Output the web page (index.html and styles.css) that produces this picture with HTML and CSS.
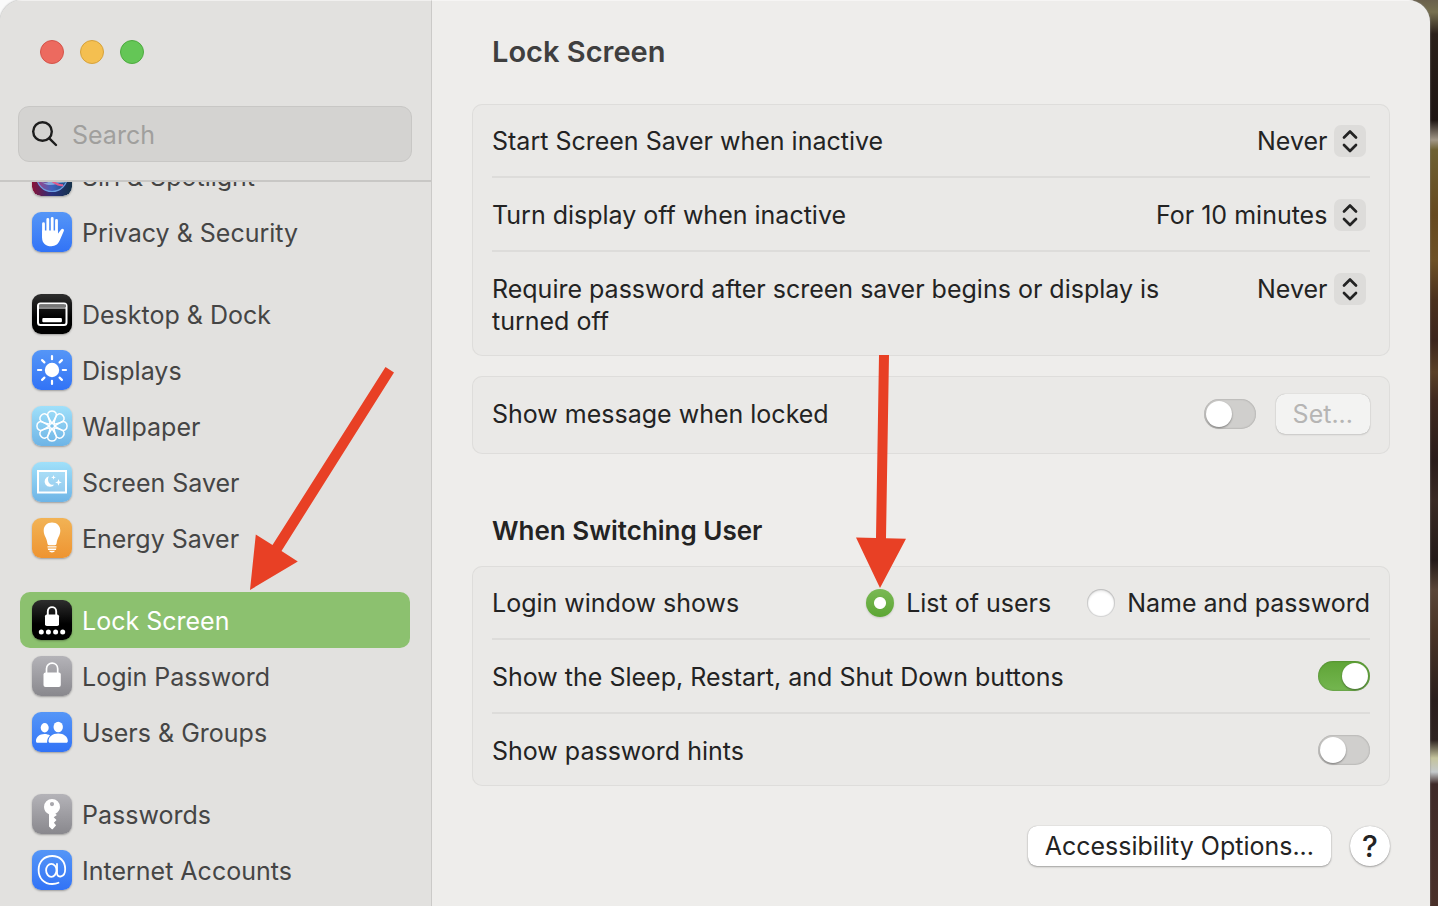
FILE: index.html
```html
<!DOCTYPE html>
<html lang="en">
<head>
<meta charset="utf-8">
<title>Lock Screen</title>
<link rel="stylesheet" href="styles.css">
</head>
<body>
<div class="window">
  <aside class="sidebar">
    <header class="sidebar-head">
      <div class="lights">
        <button class="light close" aria-label="Close"></button>
        <button class="light minimize" aria-label="Minimize"></button>
        <button class="light zoom" aria-label="Zoom"></button>
      </div>
      <label class="search">
        <svg class="search-icon" viewBox="0 0 28 28" aria-hidden="true"><circle cx="11.5" cy="11.5" r="9.3"/><path d="M18.3 18.3 25 25"/></svg>
        <input class="search-input" type="search" placeholder="Search" aria-label="Search">
      </label>
    </header>
    <nav class="nav">
      <div class="nav-list">
        <div class="nav-group">
          <a class="nav-item" href="#siri">
            <svg class="icon siri" viewBox="0 0 40 40" aria-hidden="true">
              <defs>
                <linearGradient id="siri-bg" x1="0" y1="0" x2="1" y2="0"><stop offset="0" stop-color="#8a1236"/><stop offset=".5" stop-color="#28307e"/><stop offset="1" stop-color="#16324a"/></linearGradient>
                <linearGradient id="siri-orb" x1="0" y1="0" x2="1" y2="0"><stop offset="0" stop-color="#a8407e"/><stop offset=".5" stop-color="#3f62c0"/><stop offset="1" stop-color="#1c4c7c"/></linearGradient>
              </defs>
              <rect width="40" height="40" rx="9" fill="url(#siri-bg)"/>
              <circle cx="20" cy="20" r="15.5" fill="url(#siri-orb)" stroke="#6c9de0" stroke-width="1.200"/>
              <path d="M8 25c7 5 10-1 14-3s8 1 11 5c-8-2-13 7-25-2z" fill="#a7d4f5" opacity=".6"/>
              <path d="M10 21c9 1 15 10 21 8" fill="none" stroke="#e05a8d" stroke-width="2"/>
            </svg>
            <span class="nav-text">Siri &amp; Spotlight</span>
          </a>
          <a class="nav-item" href="#privacy">
            <svg class="icon blue" viewBox="0 0 40 40" aria-hidden="true">
              <path d="M11.500 25V11.700M15.800 22V7.400M20.200 22V6.400M24.500 22V8.400" fill="none" stroke="#fff" stroke-width="2.800" stroke-linecap="round"/>
              <path d="M10.100 18.500v7.400c0 5 3.600 8.300 9.200 8.300 4.200 0 6.600-1.700 8.400-5.600l4.200-9.900c.5-1.500-1.600-2.800-2.800-1.300l-3.200 4.300v-3.200z" fill="#fff"/>
            </svg>
            <span class="nav-text">Privacy &amp; Security</span>
          </a>
        </div>
        <div class="nav-group">
          <a class="nav-item" href="#desktop">
            <svg class="icon black" viewBox="0 0 40 40" aria-hidden="true">
              <rect x="6" y="9.500" width="28.500" height="21.500" rx="2.500" fill="none" stroke="#fff" stroke-width="2"/>
              <path d="M7 11.800h27" stroke="#777" stroke-width="2.400"/><path d="M7 14h27" stroke="#fff" stroke-width="1.200"/>
              <rect x="10.300" y="24" width="19.600" height="4.200" rx="1" fill="#fff"/>
            </svg>
            <span class="nav-text">Desktop &amp; Dock</span>
          </a>
          <a class="nav-item" href="#displays">
            <svg class="icon blue" viewBox="0 0 40 40" aria-hidden="true">
              <circle cx="20" cy="20" r="7.200" fill="#fff"/>
              <path d="M20 6v3.200M20 30.800V34M6 20h3.200M30.800 20H34M10.100 10.100l2.300 2.300M27.600 27.600l2.300 2.300M10.100 29.900l2.300-2.300M27.600 12.400l2.300-2.300" stroke="#fff" stroke-width="2.200" stroke-linecap="round"/>
            </svg>
            <span class="nav-text">Displays</span>
          </a>
          <a class="nav-item" href="#wallpaper">
            <svg class="icon sky" viewBox="0 0 40 40" aria-hidden="true">
              <defs><path id="petal" d="M21.500 20 16.300 11.500C14.400 7.800 16.500 4.900 20 4.900s5.600 2.900 3.700 6.600L18.500 20"/></defs>
              <g fill="none" stroke="#fff" stroke-width="1.500" stroke-linejoin="round">
                <use href="#petal"/><use href="#petal" transform="rotate(45 20 20)"/><use href="#petal" transform="rotate(90 20 20)"/><use href="#petal" transform="rotate(135 20 20)"/><use href="#petal" transform="rotate(180 20 20)"/><use href="#petal" transform="rotate(225 20 20)"/><use href="#petal" transform="rotate(270 20 20)"/><use href="#petal" transform="rotate(315 20 20)"/>
              </g>
              <circle cx="20" cy="20" r="1.800" fill="#7cc3ec"/>
            </svg>
            <span class="nav-text">Wallpaper</span>
          </a>
          <a class="nav-item" href="#saver">
            <svg class="icon sky" viewBox="0 0 40 40" aria-hidden="true">
              <rect x="6" y="9" width="28" height="21.500" fill="#fff" fill-opacity=".2" stroke="#fff" stroke-width="2"/>
              <path d="M16.800 14.200a5.400 5.400 0 1 0 5.600 8.400c-4.500 1.200-8-3.200-5.600-8.400z" fill="#fff"/>
              <path d="M26.500 17l.9 2.500 2.500.9-2.500.9-.9 2.500-.9-2.500-2.500-.9 2.500-.9zM21.500 13l.6 1.800 1.800.6-1.800.6-.6 1.800-.6-1.800-1.800-.6 1.800-.6z" fill="#fff"/>
            </svg>
            <span class="nav-text">Screen Saver</span>
          </a>
          <a class="nav-item" href="#energy">
            <svg class="icon orange" viewBox="0 0 40 40" aria-hidden="true">
              <path d="M20 4.600c-4.900 0-8.300 3.500-8.300 8 0 5.200 2.700 6.500 3.700 12.600.2 1.300.6 2 1.800 2h5.600c1.200 0 1.600-.7 1.800-2 1-6.100 3.700-7.400 3.700-12.600 0-4.500-3.400-8-8.300-8z" fill="#fff"/>
              <path d="M15.500 28.200h9v1.400h-9zM15.700 30.500h8.600l-.4 1.400h-7.800zM17 32.700h6c-.5 1.200-1.600 1.700-3 1.700s-2.500-.5-3-1.700z" fill="#fff"/>
            </svg>
            <span class="nav-text">Energy Saver</span>
          </a>
        </div>
        <div class="nav-group">
          <a class="nav-item selected" href="#lock" aria-current="page">
            <svg class="icon black" viewBox="0 0 40 40" aria-hidden="true">
              <rect x="13" y="14.500" width="14" height="11.500" rx="1.800" fill="#fff"/>
              <path d="M15.800 15v-3.500c0-5.800 8.400-5.800 8.400 0V15" fill="none" stroke="#fff" stroke-width="1.900"/>
              <g fill="#fff"><circle cx="9.300" cy="32" r="2.500"/><circle cx="16.400" cy="32" r="2.500"/><circle cx="23.600" cy="32" r="2.500"/><circle cx="30.700" cy="32" r="2.500"/></g>
            </svg>
            <span class="nav-text">Lock Screen</span>
          </a>
          <a class="nav-item" href="#login">
            <svg class="icon gray" viewBox="0 0 40 40" aria-hidden="true">
              <rect x="11.500" y="16.500" width="17.300" height="14.500" rx="2" fill="#fff"/>
              <path d="M14.500 17v-4.300c0-7.400 11.200-7.400 11.200 0V17" fill="none" stroke="#fff" stroke-width="1.700"/>
            </svg>
            <span class="nav-text">Login Password</span>
          </a>
          <a class="nav-item" href="#users">
            <svg class="icon blue" viewBox="0 0 40 40" aria-hidden="true">
              <g fill="#fff">
                <ellipse cx="12.700" cy="15.800" rx="4" ry="4.700"/>
                <path d="M4 29c0-4.200 3.700-7 8.500-7 2.200 0 4 .5 5.500 1.500-2 1.700-3 4-2.900 7.300H5.500C4.400 30.800 4 30.100 4 29z"/>
                <ellipse cx="26.200" cy="15" rx="4.700" ry="5.200"/>
                <path d="M16.500 29c0-4.300 4-7.500 9.700-7.500s9.600 3.200 9.600 7.500c0 1.100-.5 1.800-1.700 1.800H18.200c-1.200 0-1.700-.7-1.700-1.800z"/>
              </g>
            </svg>
            <span class="nav-text">Users &amp; Groups</span>
          </a>
        </div>
        <div class="nav-group">
          <a class="nav-item" href="#passwords">
            <svg class="icon gray" viewBox="0 0 40 40" aria-hidden="true">
              <path fill-rule="evenodd" d="M20 5a8 8 0 0 0-8 8c0 3.300 2 6 5 7.300v12.200l2.600 2.500c.5.400.9.400 1.300-.1l3.200-3.600-2.200-2.500 2.600-2.700-2.800-2.800 3.200-2.200-1.600-1.400c2.900-1.400 4.700-4.200 4.700-6.700a8 8 0 0 0-8-8zm0 3a2.100 2.100 0 1 1 0 4.200 2.100 2.100 0 0 1 0-4.200z" fill="#fff"/>
            </svg>
            <span class="nav-text">Passwords</span>
          </a>
          <a class="nav-item" href="#internet">
            <svg class="icon blue" viewBox="0 0 40 40" aria-hidden="true">
              <g fill="none" stroke="#fff" stroke-width="1.800" stroke-linecap="round">
                <ellipse cx="19.300" cy="20.300" rx="5.200" ry="6.500"/>
                <path d="M25 14v9.300c0 4.800 8.200 4.800 8.200-4.300 0-8-5.500-13-13-13C12 6 6.600 11.800 6.600 20S12 34 20.200 34c2.600 0 4.600-.4 6.300-1.200"/>
              </g>
            </svg>
            <span class="nav-text">Internet Accounts</span>
          </a>
        </div>
      </div>
    </nav>
  </aside>

  <main class="content">
    <h1 class="title">Lock Screen</h1>

    <section class="card">
      <div class="row">
        <label class="row-label" for="saver-time">Start Screen Saver when inactive</label>
        <span class="popup">
          <select class="popup-select" id="saver-time"><option>Never</option></select>
          <svg class="stepper" viewBox="0 0 32 32" aria-hidden="true"><path d="m10 12.500 6-6 6 6M10 20l6 6 6-6"/></svg>
        </span>
      </div>
      <div class="row">
        <label class="row-label" for="display-time">Turn display off when inactive</label>
        <span class="popup">
          <select class="popup-select" id="display-time"><option>For 10 minutes</option></select>
          <svg class="stepper" viewBox="0 0 32 32" aria-hidden="true"><path d="m10 12.500 6-6 6 6M10 20l6 6 6-6"/></svg>
        </span>
      </div>
      <div class="row">
        <label class="row-label" for="password-time">Require password after screen saver begins or display is turned off</label>
        <span class="popup">
          <select class="popup-select" id="password-time"><option>Never</option></select>
          <svg class="stepper" viewBox="0 0 32 32" aria-hidden="true"><path d="m10 12.500 6-6 6 6M10 20l6 6 6-6"/></svg>
        </span>
      </div>
    </section>

    <section class="card">
      <div class="row row-message">
        <label class="row-label" for="message">Show message when locked</label>
        <input class="switch" id="message" type="checkbox">
        <button class="button" disabled>Set...</button>
      </div>
    </section>

    <h2 class="subtitle">When Switching User</h2>

    <section class="card">
      <div class="row">
        <span class="row-label" id="login-shows">Login window shows</span>
        <div class="radios" role="radiogroup" aria-labelledby="login-shows">
          <label class="choice"><input class="radio" type="radio" name="login" checked>List of users</label>
          <label class="choice"><input class="radio" type="radio" name="login">Name and password</label>
        </div>
      </div>
      <div class="row">
        <label class="row-label" for="power-buttons">Show the Sleep, Restart, and Shut Down buttons</label>
        <input class="switch" id="power-buttons" type="checkbox" checked>
      </div>
      <div class="row">
        <label class="row-label" for="hints">Show password hints</label>
        <input class="switch" id="hints" type="checkbox">
      </div>
    </section>

    <footer class="actions">
      <button class="button">Accessibility Options...</button>
      <button class="button help" aria-label="Help">?</button>
    </footer>
  </main>
</div>

<svg class="arrow arrow-left" viewBox="0 0 144 224" aria-hidden="true"><path d="m135.500 1 8.500 5.500L31.500 185l16.300 10.500L0 224l5.800-55.500L22.500 179z"/></svg>
<svg class="arrow arrow-right" viewBox="0 0 50 233" aria-hidden="true"><path d="M23 0h10l-3 183.300 20 .5L24 233 0 182.500l20 .5z"/></svg>
</body>
</html>
```

FILE: styles.css
```css
* {
  box-sizing: border-box;
}

body {
  margin: 0;
  height: 100vh;
  padding-right: 8px;
  overflow: hidden;
  position: relative;
  font-family: Inter, "Liberation Sans", sans-serif;
  font-size: 25px;
  line-height: 32px;
  color: #232323;
  background:
    linear-gradient(#6a604c 0, #77704f 12px, #2b201a 34px, #1e1512 120px, #a29787 140px, #6e6032 150px, #66491f 215px, #6e5126 260px, #4a301d 300px, #3c251c 340px, #5a4027 372px, #40291f 400px, #2a1c1a 460px, #3a2a24 500px, #241a18 560px, #5a4638 590px, #4a3426 630px, #2a1e1c 700px, #2e2320 740px, #c4c39c 758px, #c4c9cb 772px, #3f2a28 784px, #4a3029 906px) right / 40px 100% no-repeat,
    #fafafa;
}

.window {
  display: flex;
  height: 100%;
  border-radius: 22px 22px 0 0;
  overflow: hidden;
  background: #eeedeb;
  box-shadow: 0 0 2px #888;
}

.sidebar {
  flex: 0 0 432px;
  min-width: 0;
  display: flex;
  flex-direction: column;
  background: #e2e1df;
  border-top: 1px solid #f1f0ef;
  border-right: 1px solid #cbcac8;
}

.sidebar-head {
  padding: 39px 19px 18px 18px;
  border-bottom: 2px solid #c8c7c5;
}

.lights {
  display: flex;
  gap: 16px;
  padding-left: 22px;
  margin-bottom: 42px;
}

.light {
  width: 24px;
  height: 24px;
  padding: 0;
  border: 1px solid;
  border-radius: 50%;
}

.close {
  background: #ec6a5f;
  border-color: #d4544a;
}

.minimize {
  background: #f4bf50;
  border-color: #d6a23c;
}

.zoom {
  background: #64c656;
  border-color: #4dab3f;
}

.search {
  display: flex;
  align-items: center;
  gap: 13px;
  height: 56px;
  padding: 0 12px;
  border: 1px solid #c8c7c5;
  border-radius: 11px;
  background: #d4d3d1;
}

.search-icon {
  flex: none;
  width: 28px;
  height: 28px;
  fill: none;
  stroke: #1d1d1d;
  stroke-width: 2.4;
  stroke-linecap: round;
}

.search-input {
  flex: 1;
  min-width: 0;
  padding: 2px 0 0;
  border: 0;
  outline: 0;
  background: none;
  font: inherit;
  color: #232323;
}

.search-input::placeholder {
  color: #a09f9d;
}

.nav {
  flex: 1;
  min-height: 0;
  overflow: hidden;
}

.nav-list {
  display: flex;
  flex-direction: column;
  gap: 26px;
  margin-top: -34px;
  padding: 0 21px 0 20px;
}

.nav-item {
  display: flex;
  align-items: center;
  gap: 10px;
  height: 56px;
  padding: 0 12px;
  border-radius: 10px;
  color: #454545;
  text-decoration: none;
}

.nav-text {
  padding-top: 2px;
}

.selected {
  background: #8cc16f;
  color: #fff;
}

.icon {
  flex: none;
  width: 40px;
  height: 40px;
  border-radius: 9px;
  box-shadow: 0 1px 2px rgba(0, 0, 0, 0.3);
}

.blue {
  background: linear-gradient(#5596f7, #3273f6);
}

.black {
  background: linear-gradient(#2e2e2e, #000 60%);
}

.sky {
  background: linear-gradient(#a0e0fa, #6eb4e6);
}

.orange {
  background: linear-gradient(#f2b355, #ee9431);
}

.gray {
  background: linear-gradient(#b4b3b8, #89888d);
}

.content {
  flex: 1;
  min-width: 0;
  padding: 32px 40px;
  border-top: 1px solid #f6f5f4;
}

.title {
  margin: 0 20px 33px;
  font-size: 29px;
  line-height: 38px;
  font-weight: 600;
  color: #3f3f3f;
}

.card {
  padding: 0 20px;
  border-radius: 10px;
  background: #eae9e7;
  box-shadow: inset 0 0 0 1px #dedddb;
}

.card + .card {
  margin-top: 20px;
}

.row {
  display: flex;
  align-items: flex-start;
  justify-content: space-between;
  padding: 21px 0 19px;
}

.row:not(:last-child) {
  border-bottom: 2px solid #dddcda;
}

.row-label {
  flex: 0 1 auto;
  max-width: 700px;
}

.row-message {
  align-items: center;
  gap: 20px;
  padding: 18px 0 20px;
}

.row-message .row-label {
  flex: 1;
}

.popup {
  display: grid;
  align-items: center;
  padding-right: 4px;
}

.popup-select,
.stepper {
  grid-area: 1 / 1;
}

.popup-select {
  appearance: none;
  height: 32px;
  padding: 0 38px 0 0;
  border: 0;
  background: none;
  font: inherit;
  color: inherit;
}

.stepper {
  justify-self: end;
  width: 32px;
  height: 32px;
  border-radius: 7px;
  background: #dddcda;
  fill: none;
  stroke: #232323;
  stroke-width: 2.7;
  stroke-linecap: round;
  stroke-linejoin: round;
  pointer-events: none;
}

.switch {
  appearance: none;
  flex: none;
  display: flex;
  width: 52px;
  height: 30px;
  margin: 0;
  padding: 2px;
  border-radius: 15px;
  background: #d0cfcd;
  box-shadow: inset 0 0 2px rgba(0, 0, 0, 0.3);
}

.switch::before {
  content: "";
  width: 26px;
  height: 26px;
  border-radius: 50%;
  background: #fff;
  box-shadow: 0 1px 2px rgba(0, 0, 0, 0.4);
}

.switch:checked {
  justify-content: flex-end;
  background: linear-gradient(#5fa436, #74b650);
}

.button {
  height: 40px;
  padding: 0 17px;
  border: 0;
  border-radius: 9px;
  background: #fff;
  box-shadow: 0 0 1px rgba(0, 0, 0, 0.3), 0 1px 2px rgba(0, 0, 0, 0.3);
  font: inherit;
  color: #232323;
}

.button:disabled {
  background: #f3f3f2;
  color: #b6b5b4;
  box-shadow: 0 0 1px rgba(0, 0, 0, 0.3), 0 1px 2px rgba(0, 0, 0, 0.12);
}

.subtitle {
  margin: 61px 20px 19px;
  font-size: 26px;
  line-height: 32px;
  font-weight: 600;
}

.radios {
  display: flex;
  gap: 36px;
}

.choice {
  display: flex;
  align-items: center;
  gap: 12px;
}

.radio {
  appearance: none;
  width: 28px;
  height: 28px;
  margin: 0;
  border-radius: 50%;
  background: #fff;
  box-shadow: inset 0 0 1px 1px rgba(0, 0, 0, 0.18), inset 0 2px 3px rgba(0, 0, 0, 0.12);
}

.radio:checked {
  background: radial-gradient(circle, #fff 5.5px, transparent 6.5px), linear-gradient(#7ab955, #5ca634);
  box-shadow: 0 1px 2px rgba(0, 0, 0, 0.15);
}

.actions {
  display: flex;
  justify-content: flex-end;
  gap: 19px;
  margin-top: 40px;
}

.help {
  width: 40px;
  padding: 0;
  border-radius: 50%;
  font-size: 30px;
  font-weight: 500;
}

.arrow {
  position: absolute;
  fill: #e84025;
  pointer-events: none;
}

.arrow-left {
  left: 250px;
  top: 366px;
  width: 144px;
  height: 224px;
}

.arrow-right {
  left: 856px;
  top: 355px;
  width: 50px;
  height: 233px;
}
```
